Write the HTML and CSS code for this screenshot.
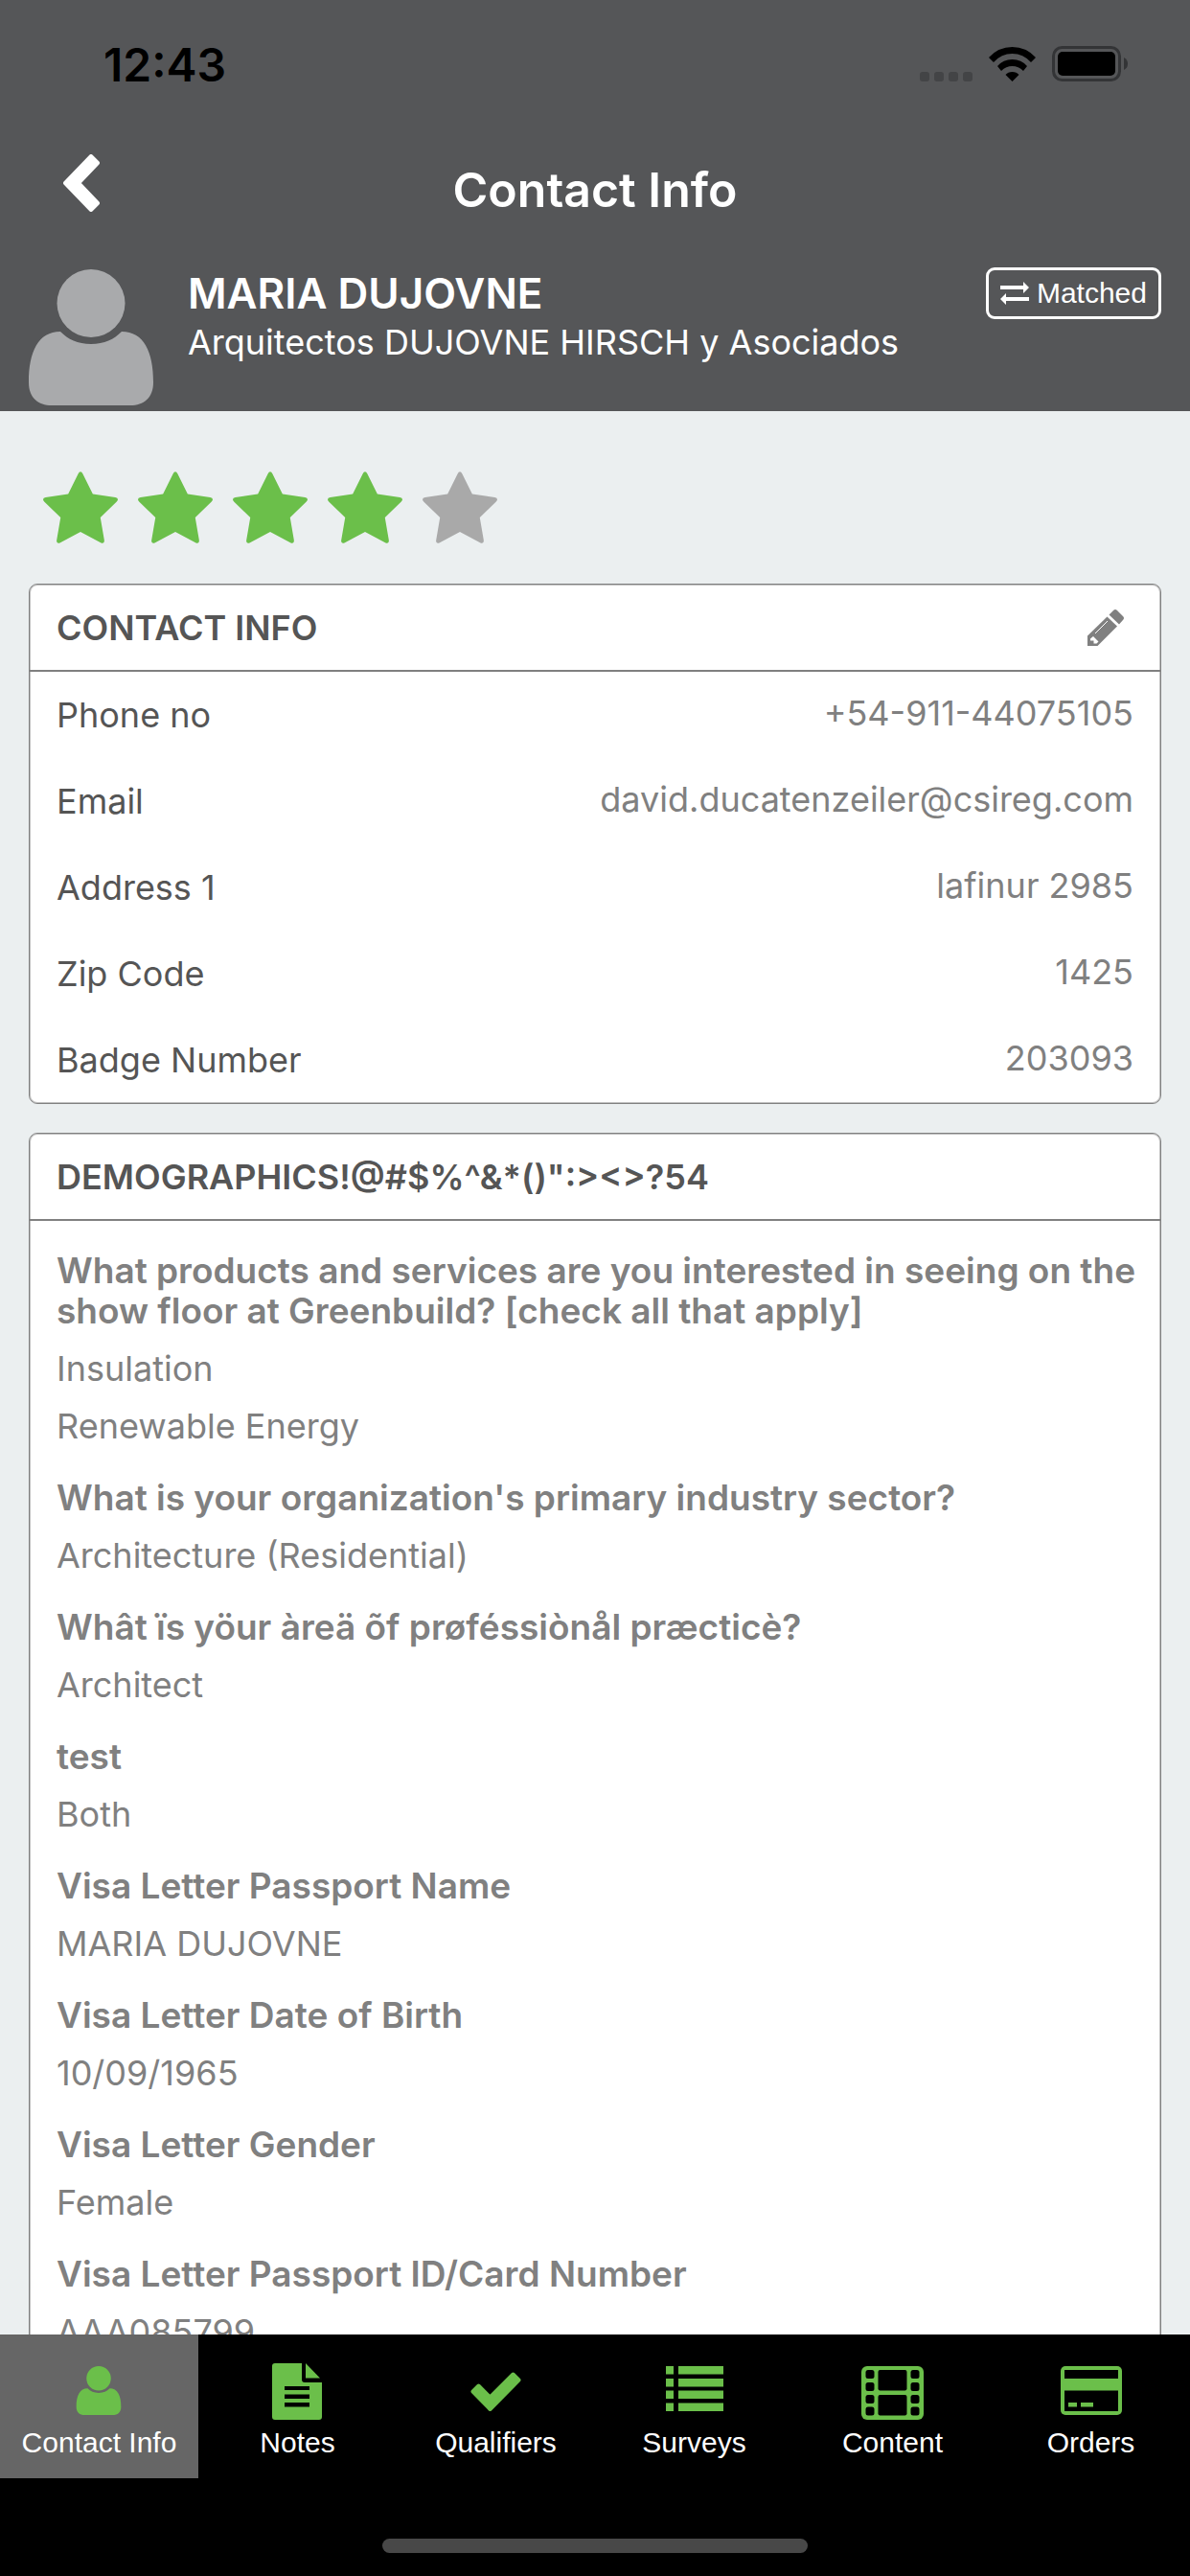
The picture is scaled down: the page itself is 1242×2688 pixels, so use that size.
FILE: index.html
```html
<!doctype html>
<html lang="en">

<head>
  <meta charset="UTF-8" />
  <meta name="viewport" content="width=device-width, initial-scale=1.0" />
  <title>Contact Info</title>
  <link rel="stylesheet" href="styles.css">
</head>

<body>
  <!-- shared icon shapes -->
  <svg class="symbols" aria-hidden="true">
    <symbol id="person" viewBox="0 0 130 142">
      <circle cx="65" cy="35.5" r="35.5" />
      <path d="M33 65C41 73 51 78 65 78S89 73 97 65C120 65 130 86 130 118C130 134 120 142 106 142H24C10 142 0 134 0 118C0 86 10 65 33 65Z" />
    </symbol>
    <symbol id="star" viewBox="64 32 1664 1587">
      <path d="M1728 647q0 22-26 48l-363 354 86 500q1 7 1 20 0 21-10.500 35.500t-30.500 14.500q-19 0-40-12l-449-236-449 236q-22 12-40 12-21 0-31.500-14.500t-10.500-35.500q0-6 2-20l86-500-364-354q-25-27-25-48 0-37 56-46l502-73 225-455q19-41 49-41t49 41l225 455 502 73q56 9 56 46z" />
    </symbol>
  </svg>

  <header class="header">
    <div class="status-bar">
      <span class="time">12:43</span>
      <div class="status-icons">
        <svg class="signal" viewBox="0 0 55 10">
          <rect width="10" height="10" rx="3" />
          <rect x="15" width="10" height="10" rx="3" />
          <rect x="30" width="10" height="10" rx="3" />
          <rect x="45" width="10" height="10" rx="3" />
        </svg>
        <svg class="wifi" viewBox="0 0 49 36">
          <path d="M0 11Q10 0 24.500 0T49 11L44 16Q36 7 24.500 7T5 16Z" />
          <path d="M9 20Q15 13 24.500 13T40 20L36 25Q31 20 24.500 20T13 25Z" />
          <path d="M17.500 29Q20 26 24.500 26T31.500 29L24.500 36Z" />
        </svg>
        <svg class="battery" viewBox="0 0 79 37">
          <rect class="battery-case" x="1.500" y="1.500" width="69" height="34" rx="9" />
          <rect x="6" y="6" width="60" height="25" rx="5" />
          <path class="battery-nub" d="M75 12Q79 14 79 18.500T75 25Z" />
        </svg>
      </div>
    </div>

    <nav class="navbar">
      <button class="back-btn" aria-label="Back">
        <svg viewBox="0 0 38 60">
          <path d="M29 2L36 9L16 30L36 51L29 58L2 30Z" />
        </svg>
      </button>
      <h1>Contact Info</h1>
    </nav>

    <div class="profile">
      <svg class="avatar"><use href="#person" /></svg>
      <div class="profile-info">
        <h2>MARIA DUJOVNE</h2>
        <p>Arquitectos DUJOVNE HIRSCH y Asociados</p>
      </div>
      <button class="matched-btn">
        <svg viewBox="0 0 30 24">
          <path d="M0 4H24V0L30 6L24 12V8H0Z" />
          <path d="M30 16H6V12L0 18L6 24V20H30Z" />
        </svg>
        Matched
      </button>
    </div>
  </header>

  <main>
    <div class="rating">
      <button aria-label="1 star"><svg><use href="#star" /></svg></button>
      <button aria-label="2 stars"><svg><use href="#star" /></svg></button>
      <button aria-label="3 stars"><svg><use href="#star" /></svg></button>
      <button aria-label="4 stars"><svg><use href="#star" /></svg></button>
      <button aria-label="5 stars" class="off"><svg><use href="#star" /></svg></button>
    </div>

    <section class="card">
      <div class="card-header">
        <h3>CONTACT INFO</h3>
        <button class="edit-btn" aria-label="Edit contact info">
          <svg viewBox="0 0 38 38">
            <path d="M22.500 5.500L27 1Q29 -1 31 1L37 7Q39 9 37 11L33 15.500Z" />
            <path d="M20.500 7.500L31 17.500L10.500 38H0V27.500Z" />
            <path class="cut" d="M6 28L11.500 33.500L9.500 35.500H6.500V32.500H3V30.500Z" />
            <path class="slot" d="M8 25L21 12" />
          </svg>
        </button>
      </div>
      <dl class="contact-list">
        <div class="row">
          <dt>Phone no</dt>
          <dd>+54-911-44075105</dd>
        </div>
        <div class="row">
          <dt>Email</dt>
          <dd>david.ducatenzeiler@csireg.com</dd>
        </div>
        <div class="row">
          <dt>Address 1</dt>
          <dd>lafinur 2985</dd>
        </div>
        <div class="row">
          <dt>Zip Code</dt>
          <dd>1425</dd>
        </div>
        <div class="row">
          <dt>Badge Number</dt>
          <dd>203093</dd>
        </div>
      </dl>
    </section>

    <section class="card">
      <div class="card-header">
        <h3>DEMOGRAPHICS!@#$%^&amp;*()":&gt;&lt;&gt;?54</h3>
      </div>
      <div class="questions">
        <div class="question">
          <h4>What products and services are you interested in seeing on the show floor at Greenbuild? [check all that apply]</h4>
          <p>Insulation</p>
          <p>Renewable Energy</p>
        </div>
        <div class="question">
          <h4>What is your organization's primary industry sector?</h4>
          <p>Architecture (Residential)</p>
        </div>
        <div class="question">
          <h4>Whât ïs yöur àreä õf prøféssiònål præcticè?</h4>
          <p>Architect</p>
        </div>
        <div class="question">
          <h4>test</h4>
          <p>Both</p>
        </div>
        <div class="question">
          <h4>Visa Letter Passport Name</h4>
          <p>MARIA DUJOVNE</p>
        </div>
        <div class="question">
          <h4>Visa Letter Date of Birth</h4>
          <p>10/09/1965</p>
        </div>
        <div class="question">
          <h4>Visa Letter Gender</h4>
          <p>Female</p>
        </div>
        <div class="question">
          <h4>Visa Letter Passport ID/Card Number</h4>
          <p>AAA085799</p>
        </div>
      </div>
    </section>
  </main>

  <footer class="footer">
    <nav class="tabs">
      <a href="#" class="active">
        <svg viewBox="0 0 66 60"><use href="#person" x="8" y="3" width="48" height="51" /></svg>
        Contact Info
      </a>
      <a href="#">
        <svg viewBox="0 0 66 60">
          <path fill-rule="evenodd" d="M9 0H37V17Q37 20 40 20H58V56Q58 59 55 59H9Q6 59 6 56V3Q6 0 9 0ZM19 24V28H45V24ZM19 32.500V37H45V32.500ZM19 41V45.500H45V41Z" />
          <path d="M41 0L56 15.500H41Z" />
        </svg>
        Notes
      </a>
      <a href="#">
        <svg viewBox="0 0 66 60">
          <path class="rounded" d="M8.500 29.500L14.500 23.500L26.500 35.500L50.500 11.500L56.500 17.500L26.500 48Z" />
        </svg>
        Qualifiers
      </a>
      <a href="#">
        <svg viewBox="0 0 66 60">
          <path d="M3 3H11V11.500H3ZM16 3H63V11.500H16ZM3 16H11V24.500H3ZM16 16H63V24.500H16ZM3 28.500H11V37H3ZM16 28.500H63V37H16ZM3 41.500H11V50H3ZM16 41.500H63V50H16Z" />
        </svg>
        Surveys
      </a>
      <a href="#">
        <svg viewBox="0 0 66 60">
          <rect y="3" width="65" height="56" rx="6" />
          <g class="hole">
            <rect x="4.500" y="7" width="9" height="9" rx="2.500" />
            <rect x="4.500" y="20" width="9" height="9" rx="2.500" />
            <rect x="4.500" y="33" width="9" height="9" rx="2.500" />
            <rect x="4.500" y="45.500" width="9" height="9" rx="2.500" />
            <rect x="17.500" y="7" width="30" height="21.500" rx="2" />
            <rect x="17.500" y="33" width="30" height="21.500" rx="2" />
            <rect x="51.500" y="7" width="9" height="9" rx="2.500" />
            <rect x="51.500" y="20" width="9" height="9" rx="2.500" />
            <rect x="51.500" y="33" width="9" height="9" rx="2.500" />
            <rect x="51.500" y="45.500" width="9" height="9" rx="2.500" />
          </g>
        </svg>
        Content
      </a>
      <a href="#">
        <svg viewBox="0 0 66 60">
          <rect x="1" y="3" width="64" height="51" rx="5" />
          <path class="hole" d="M5 7H61V16H5ZM5 28.500H61V50H5Z" />
          <path d="M9 41H18V45.500H9ZM22 41H35V45.500H22Z" />
        </svg>
        Orders
      </a>
    </nav>
    <div class="home-bar"></div>
  </footer>
</body>

</html>
```

FILE: styles.css
```css
* {
  box-sizing: border-box;
}

body {
  font-family: Inter, "Liberation Sans", sans-serif;
  font-size: 36px;
  line-height: 42px;
  background-color: #ebeff0;
  color: #808080;
  margin: 0;
  height: 100vh;
  display: flex;
  flex-direction: column;
}

h1,
h2,
h3,
h4,
p,
dl,
dd {
  margin: 0;
}

h1,
h2,
h3,
h4 {
  font-weight: 600;
}

button {
  background: none;
  border: none;
  padding: 0;
  font: inherit;
  color: inherit;
}

svg {
  display: block;
  fill: currentColor;
}

.symbols {
  position: absolute;
  width: 0;
  height: 0;
}

/* header */
.header {
  background-color: #555658;
  color: #ffffff;
  flex: none;
}

.status-bar {
  height: 132px;
  padding: 48px 65px 0 108px;
  display: flex;
  justify-content: space-between;
  align-items: flex-start;
  color: #000000;
}

.time {
  font-size: 48px;
  line-height: 40px;
  font-weight: 600;
}

.status-icons {
  display: flex;
  align-items: flex-end;
  gap: 17px;
}

.signal {
  width: 55px;
  height: 10px;
  color: #434446;
}

.wifi {
  width: 49px;
  height: 36px;
}

.battery {
  width: 79px;
  height: 37px;
}

.battery-case {
  fill: none;
  stroke: #333436;
  stroke-width: 3px;
}

.battery-nub {
  fill: #333436;
}

.navbar {
  height: 132px;
  padding: 0 66px;
  display: grid;
  grid-template-columns: 1fr auto 1fr;
  align-items: center;
}

.navbar h1 {
  font-size: 50px;
  line-height: 60px;
}

.back-btn {
  justify-self: start;
  padding-bottom: 14px;
}

.back-btn svg {
  width: 38px;
  height: 60px;
  stroke: currentColor;
  stroke-width: 4px;
  stroke-linejoin: round;
}

.profile {
  padding: 15px 30px 6px;
  display: flex;
  align-items: flex-start;
}

.avatar {
  width: 130px;
  height: 142px;
  margin-top: 2px;
  color: #a9aaac;
}

.profile-info {
  flex: 1;
  padding-left: 36px;
}

.profile-info h2 {
  font-size: 44px;
  line-height: 54px;
}

.profile-info p {
  line-height: 48px;
}

.matched-btn {
  height: 54px;
  padding: 0 12px;
  border: 3px solid #ffffff;
  border-radius: 9px;
  display: flex;
  align-items: center;
  gap: 8px;
  font-family: "Liberation Sans", sans-serif;
  font-size: 30px;
}

.matched-btn svg {
  width: 30px;
  height: 24px;
}

/* content */
main {
  flex: 1;
  min-height: 0;
  overflow-y: auto;
  scrollbar-width: none;
  padding: 63px 30px 30px;
}

.rating {
  display: flex;
  gap: 21px;
  padding: 0 15px 42px;
  color: #6bbf4a;
}

.rating svg {
  width: 78px;
  height: 75px;
}

.rating .off {
  color: #a9a9a9;
}

.card {
  background-color: #ffffff;
  border: 1px solid #808080;
  border-radius: 9px;
  box-shadow: inset 0 0 0 1px #c0c0c0;
  margin-bottom: 30px;
}

.card-header {
  height: 91px;
  padding: 0 28px;
  border-bottom: 2px solid #808080;
  display: flex;
  justify-content: space-between;
  align-items: center;
}

.card-header h3 {
  font-size: 36px;
  color: #555555;
}

.edit-btn {
  padding-right: 10px;
}

.edit-btn svg {
  width: 38px;
  height: 38px;
}

.cut {
  fill: #ffffff;
}

.slot {
  stroke: #ffffff;
  stroke-width: 1px;
}

.row {
  height: 90px;
  padding: 0 28px;
  display: flex;
  justify-content: space-between;
  align-items: center;
}

.row dt {
  color: #555555;
}

.row dd {
  padding-bottom: 4px;
}

.questions {
  padding: 31px 20px 31px 28px;
  display: flex;
  flex-direction: column;
  gap: 33px;
}

.question {
  display: flex;
  flex-direction: column;
  gap: 18px;
}

.question h4 {
  font-size: 37px;
}

/* bottom tabs */
.footer {
  background-color: #000000;
  flex: none;
}

.tabs {
  display: flex;
}

.tabs a {
  flex: 1;
  height: 150px;
  padding-top: 30px;
  display: flex;
  flex-direction: column;
  align-items: center;
  gap: 2px;
  font-family: "Liberation Sans", sans-serif;
  font-size: 30px;
  color: #ffffff;
  text-decoration: none;
}

.tabs .active {
  background-color: #666666;
}

.tabs svg {
  width: 66px;
  height: 60px;
  color: #6bbf4a;
}

.rounded {
  stroke: currentColor;
  stroke-width: 4px;
  stroke-linejoin: round;
}

.hole {
  fill: #000000;
}

.home-bar {
  width: 444px;
  height: 15px;
  margin: 63px auto 24px;
  border-radius: 8px;
  background-color: #484848;
}
```
